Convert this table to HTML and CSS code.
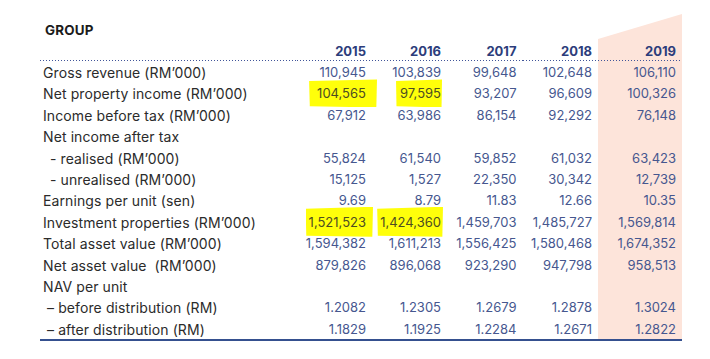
FILE: index.html
```html
<!DOCTYPE html>
<html lang="en">
<head>
  <meta charset="UTF-8">
  <meta name="viewport" content="width=device-width, initial-scale=1.0">
  <title>Five-Year Financial Highlights</title>
  <link rel="stylesheet" href="styles.css">
</head>
<body>

<div class="report">
  <h2 class="group">GROUP</h2>
  <table class="fin">
    <colgroup>
      <col class="c-label"><col class="c-y"><col class="c-y"><col class="c-y3"><col class="c-y3"><col class="c-last">
    </colgroup>
    <thead>
      <tr>
        <th></th>
        <th>2015</th>
        <th>2016</th>
        <th>2017</th>
        <th>2018</th>
        <th class="now">2019</th>
      </tr>
    </thead>
    <tbody>
      <tr>
        <td>Gross revenue (RM’000)</td>
        <td>110,945</td><td>103,839</td><td>99,648</td><td>102,648</td><td class="now">106,110</td>
      </tr>
      <tr>
        <td>Net property income (RM’000)</td>
        <td><span class="hl hl-1">104,565</span></td><td><span class="hl hl-2">97,595</span></td><td>93,207</td><td>96,609</td><td class="now">100,326</td>
      </tr>
      <tr>
        <td>Income before tax (RM’000)</td>
        <td>67,912</td><td>63,986</td><td>86,154</td><td>92,292</td><td class="now">76,148</td>
      </tr>
      <tr>
        <td>Net income after tax</td>
        <td></td><td></td><td></td><td></td><td class="now"></td>
      </tr>
      <tr>
        <td class="sub">- realised (RM’000)</td>
        <td>55,824</td><td>61,540</td><td>59,852</td><td>61,032</td><td class="now">63,423</td>
      </tr>
      <tr>
        <td class="sub">- unrealised (RM’000)</td>
        <td>15,125</td><td>1,527</td><td>22,350</td><td>30,342</td><td class="now">12,739</td>
      </tr>
      <tr>
        <td>Earnings per unit (sen)</td>
        <td>9.69</td><td>8.79</td><td>11.83</td><td>12.66</td><td class="now">10.35</td>
      </tr>
      <tr>
        <td>Investment properties (RM’000)</td>
        <td><span class="hl hl-3">1,521,523</span></td><td><span class="hl hl-4">1,424,360</span></td><td>1,459,703</td><td>1,485,727</td><td class="now">1,569,814</td>
      </tr>
      <tr>
        <td>Total asset value (RM’000)</td>
        <td>1,594,382</td><td>1,611,213</td><td>1,556,425</td><td>1,580,468</td><td class="now">1,674,352</td>
      </tr>
      <tr>
        <td>Net asset value&nbsp; (RM’000)</td>
        <td>879,826</td><td>896,068</td><td>923,290</td><td>947,798</td><td class="now">958,513</td>
      </tr>
      <tr>
        <td>NAV per unit</td>
        <td></td><td></td><td></td><td></td><td class="now"></td>
      </tr>
      <tr>
        <td class="sub sub-nav">– before distribution (RM)</td>
        <td>1.2082</td><td>1.2305</td><td>1.2679</td><td>1.2878</td><td class="now">1.3024</td>
      </tr>
      <tr>
        <td class="sub sub-nav">– after distribution (RM)</td>
        <td>1.1829</td><td>1.1925</td><td>1.2284</td><td>1.2671</td><td class="now">1.2822</td>
      </tr>
    </tbody>
  </table>
</div>

</body>
</html>
```
FILE: styles.css
```css
* { margin: 0; padding: 0; box-sizing: border-box; }
body { background: #fff; font-family: 'Inter', 'Liberation Sans', sans-serif; color: #2e2e2e; }

.report { padding: 21px 0 0 40px; }
.group { font-size: 13.4px; font-weight: 700; line-height: 18px; color: #1b1b1b; margin-left: 5px; letter-spacing: 0.2px; }

.fin { width: 642px; border-collapse: collapse; table-layout: fixed; }
.c-label { width: 257px; }
.c-y { width: 75px; }
.c-y3 { width: 75.5px; }
.c-last { width: 84px; }

.fin th { height: 22px; line-height: 19px; padding: 3px 6px 0 0; text-align: right; font-size: 13px; font-weight: 700; color: #2c3d7b;
  background-image: linear-gradient(to right, #41559a 1px, transparent 1px); background-size: 3px 1px; background-repeat: repeat-x; background-position: left bottom; }
.fin td { height: 21.4px; line-height: 19.4px; padding: 2px 6px 0 0; text-align: right; font-size: 13px; color: #46578f; white-space: nowrap; }
.fin td:first-child { text-align: left; padding-left: 3px; font-size: 14px; letter-spacing: 0.1px; color: #2b2b2b; }
.fin td.sub { padding-left: 10px; }
.fin td.sub-nav { padding-left: 7px; }
.fin tbody tr:last-child td { border-bottom: 2px solid #35508f; }

.now { background-color: #fde4da; }
.fin th.now { position: relative; }
.fin th.now::before { content: ""; position: absolute; left: 0; right: 0; bottom: 100%; height: 25px; background: #fde4da; clip-path: polygon(0 100%, 100% 0, 100% 100%); }

.hl { display: inline-block; line-height: 16px; background: #ffff0a; color: #4d4d22; clip-path: polygon(0 6%, 100% 0, 99% 100%, 1% 96%); }
.hl-1 { padding: 6px 11px 6px 8px; margin: -6px -11px -6px -8px; }
.hl-2 { padding: 6px 1px 6px 4px; margin: -6px -1px -6px -4px; }
.hl-3 { padding: 7px 7px 7px 3px; margin: -7px -7px -7px -3px; }
.hl-4 { padding: 7px 2px 7px 3px; margin: -7px -2px -7px -3px; }
```
